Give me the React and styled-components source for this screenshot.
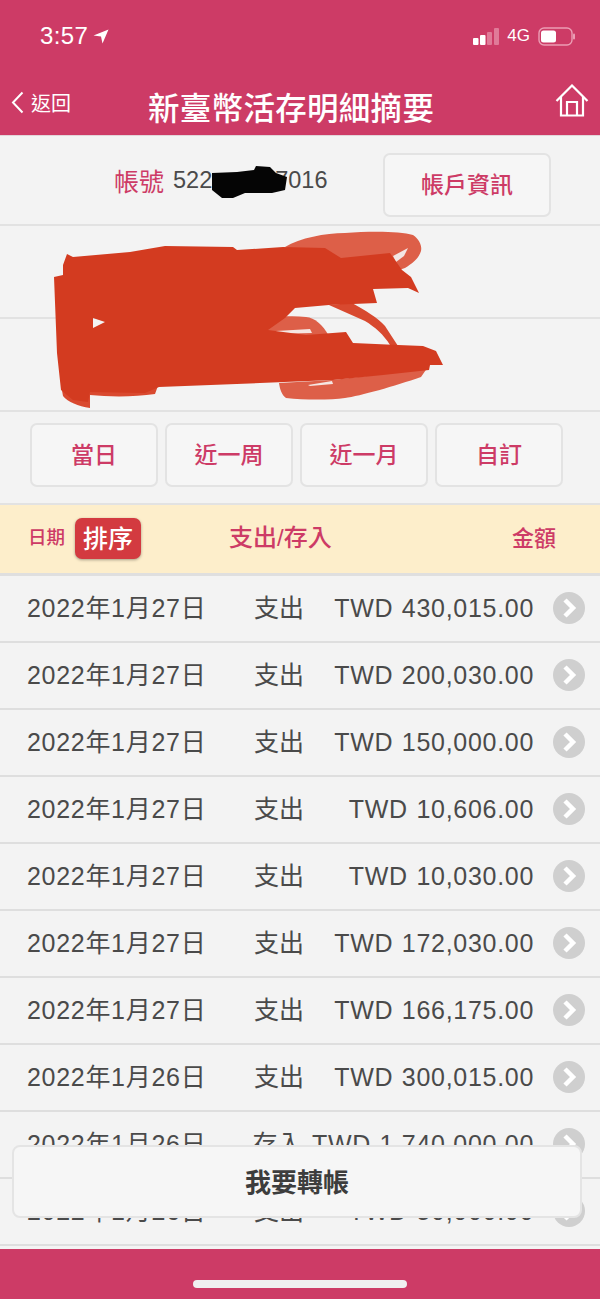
import React from 'react';
import styled, { createGlobalStyle } from 'styled-components';

const PINK = '#cd3b66';
const FONT = '"Liberation Sans", "Noto Sans CJK TC", sans-serif';

const GlobalStyle = createGlobalStyle`
  html, body { margin: 0; padding: 0; background: #f3f3f3; }
  * { box-sizing: border-box; }
`;

const Page = styled.div`
  position: relative;
  width: 600px;
  height: 1299px;
  overflow: hidden;
  background: #f3f3f3;
  font-family: ${FONT};
`;

const Header = styled.header`
  height: 136px;
  background: ${PINK};
  color: #fff;
  display: flex;
  flex-direction: column;
  border-bottom: 1px solid #e2d5d9;
`;

const StatusBar = styled.div`
  height: 78px;
  padding: 18px 25px 0 40px;
  display: flex;
  align-items: flex-start;
  justify-content: space-between;
`;

const Clock = styled.div`
  display: flex;
  align-items: center;
  gap: 5px;
  font-size: 24px;
  letter-spacing: 0.4px;
  line-height: 36px;
`;

const StatusRight = styled.div`
  display: flex;
  align-items: center;
  gap: 8px;
  height: 36px;
  font-size: 17px;
`;

const NavBar = styled.div`
  flex: 1;
  display: flex;
  align-items: center;
  padding: 0 11px;
`;

const Back = styled.div`
  display: flex;
  align-items: center;
  gap: 7px;
  font-size: 20px;
  width: 137px;
  margin-top: -8px;
`;

const Title = styled.h1`
  margin: 4px 0 0 0;
  font-size: 31.5px;
  font-weight: 500;
  letter-spacing: 0.3px;
  line-height: 40px;
  white-space: nowrap;
`;

const HomeIcon = styled.svg`
  margin-left: auto;
  margin-top: -12px;
  display: block;
`;

const Section = styled.div`
  height: ${p => p.$h}px;
  border-bottom: 2px solid #e2e2e2;
  display: flex;
  align-items: center;
`;

const AccountRow = styled(Section)`
  padding: 0 49px 0 114px;
  justify-content: space-between;
`;

const AccountText = styled.div`
  display: flex;
  align-items: center;
  gap: 9px;
  font-size: 23.5px;
  color: #4a4a4a;
`;

const Label = styled.span`
  color: ${PINK};
  font-size: 25px;
`;

// 帳號中間被遮住的部分
const HiddenDigits = styled.span`
  display: inline-block;
  width: 63px;
`;

const Button = styled.div`
  width: ${p => p.$w}px;
  height: 64px;
  padding-bottom: 4px;
  border: 2px solid #e3e3e3;
  border-radius: 7px;
  background: #f6f6f6;
  color: ${PINK};
  display: flex;
  align-items: center;
  justify-content: center;
  font-size: 23px;
  font-weight: 500;
`;

const AccountButton = styled(Button)`
  margin-top: 10px;
`;

const RangeBar = styled(Section)`
  padding: 0 0 6px 30px;
  gap: 7px;
`;

const SortHeader = styled.div`
  height: 71px;
  background: #fdeecb;
  border-bottom: 3px solid #dfdfdf;
  display: flex;
  align-items: center;
  color: ${PINK};
  font-size: 22px;
  font-weight: 500;
  padding: 0 44px 2px 28px;
`;

const DateHead = styled.span`
  font-size: 18.5px;
  width: 47px;
  margin-bottom: 5px;
`;

const SortBadge = styled.div`
  width: 66px;
  height: 41px;
  padding-bottom: 2px;
  border-radius: 7px;
  background: #d33a40;
  color: #fff;
  font-size: 25px;
  font-weight: 500;
  display: flex;
  align-items: center;
  justify-content: center;
  box-shadow: 0 1px 3px rgba(0, 0, 0, 0.35);
`;

const TypeHead = styled.span`
  margin: 0 0 5px 88px;
  font-size: 24px;
`;

const AmountHead = styled.span`
  margin: 0 0 5px auto;
`;

const Row = styled.div`
  height: 67px;
  border-bottom: 2px solid #dedede;
  display: flex;
  align-items: baseline;
  padding: 15px 15px 0 27px;
  color: #4a4a4a;
  font-size: 25px;
  line-height: 34px;
  white-space: nowrap;
`;

const DateCell = styled.span`
  width: 227px;
  letter-spacing: 0.7px;
`;

const TypeCell = styled.span`
  width: 60px;
`;

const AmountCell = styled.span`
  flex: 1;
  text-align: right;
  margin-right: 19px;
  letter-spacing: 0.7px;
  word-spacing: 1px;
`;

const Chevron = styled.svg`
  display: block;
  flex: none;
  align-self: flex-start;
  margin-top: 1px;
`;

const Scribble = styled.svg`
  position: absolute;
  left: 0;
  top: 0;
  pointer-events: none;
`;

const Footer = styled.div`
  position: absolute;
  left: 0;
  right: 0;
  bottom: 0;
  height: 50px;
  background: ${PINK};
`;

const HomeBar = styled.div`
  position: absolute;
  left: 193px;
  top: 31px;
  width: 214px;
  height: 8px;
  border-radius: 4px;
  background: #f0eff0;
`;

const TransferButton = styled.div`
  position: absolute;
  left: 12px;
  top: 1145px;
  width: 570px;
  height: 73px;
  padding-bottom: 2px;
  border: 2px solid #e4e4e4;
  border-radius: 8px;
  background: #f6f6f6;
  color: #3d3d3d;
  display: flex;
  align-items: center;
  justify-content: center;
  font-size: 26px;
  font-weight: 700;
`;

const rows = [
  ['2022年1月27日', '支出', 'TWD 430,015.00'],
  ['2022年1月27日', '支出', 'TWD 200,030.00'],
  ['2022年1月27日', '支出', 'TWD 150,000.00'],
  ['2022年1月27日', '支出', 'TWD 10,606.00'],
  ['2022年1月27日', '支出', 'TWD 10,030.00'],
  ['2022年1月27日', '支出', 'TWD 172,030.00'],
  ['2022年1月27日', '支出', 'TWD 166,175.00'],
  ['2022年1月26日', '支出', 'TWD 300,015.00'],
  ['2022年1月26日', '存入', 'TWD 1,740,000.00'],
  ['2022年1月26日', '支出', 'TWD 50,000.00'],
];

const ranges = ['當日', '近一周', '近一月', '自訂'];

const RowChevron = () => (
  <Chevron width="32" height="32" viewBox="0 0 32 32">
    <circle cx="16" cy="16" r="16" fill="#cfcfcf" />
    <path d="M12 8 L20 16 L12 24" fill="none" stroke="#fff" strokeWidth="4.5" />
  </Chevron>
);

export default function App() {
  return (
    <Page>
      <GlobalStyle />
      <Header>
        <StatusBar>
          <Clock>
            3:57
            <svg width="16" height="15" viewBox="0 0 16 15">
              <path d="M15.5 0.5 L0.5 6.5 L8 7.5 L9.5 14.5 Z" fill="#fff" />
            </svg>
          </Clock>
          <StatusRight>
            <svg width="26" height="17" viewBox="0 0 26 17">
              <rect x="0" y="10" width="5.5" height="7" rx="1" fill="#fff" />
              <rect x="7" y="7" width="5.5" height="10" rx="1" fill="#fff" />
              <rect x="14" y="4" width="5" height="13" rx="1" fill="#e07a98" />
              <rect x="21" y="0" width="5" height="17" rx="1" fill="#e07a98" />
            </svg>
            <span>4G</span>
            <svg width="37" height="19" viewBox="0 0 37 19">
              <rect x="1" y="1" width="33" height="17" rx="5" fill="none" stroke="#eb9db4" strokeWidth="1.4" />
              <rect x="3" y="3.5" width="15" height="12" rx="2.5" fill="#fff" />
              <rect x="35" y="6.5" width="2" height="6" rx="1" fill="#eb9db4" />
            </svg>
          </StatusRight>
        </StatusBar>
        <NavBar>
          <Back>
            <svg width="13" height="23" viewBox="0 0 13 23">
              <path d="M11.5 1.5 L2 11.5 L11.5 21.5" fill="none" stroke="#fff" strokeWidth="2" />
            </svg>
            返回
          </Back>
          <Title>新臺幣活存明細摘要</Title>
          <HomeIcon width="34" height="34" viewBox="0 0 34 34">
            <path d="M1.5 17 L17 1.5 L32.5 17 M6 13 V31.5 H28 V13 M12 31.5 V18 H22 V31.5" fill="none" stroke="#fff" strokeWidth="2.2" />
          </HomeIcon>
        </NavBar>
      </Header>

      <AccountRow $h={90}>
        <AccountText>
          <Label>帳號</Label>
          <span>522<HiddenDigits />7016</span>
        </AccountText>
        <AccountButton $w={168}>帳戶資訊</AccountButton>
      </AccountRow>
      <Section $h={93} />
      <Section $h={93} />
      <RangeBar $h={93}>
        {ranges.map(r => (
          <Button key={r} $w={128}>{r}</Button>
        ))}
      </RangeBar>

      <SortHeader>
        <DateHead>日期</DateHead>
        <SortBadge>排序</SortBadge>
        <TypeHead>支出/存入</TypeHead>
        <AmountHead>金額</AmountHead>
      </SortHeader>

      {rows.map((r, i) => (
        <Row key={i}>
          <DateCell>{r[0]}</DateCell>
          <TypeCell>{r[1]}</TypeCell>
          <AmountCell>{r[2]}</AmountCell>
          <RowChevron />
        </Row>
      ))}

      {/* 遮蔽塗鴉 */}
      <Scribble width="600" height="420" viewBox="0 0 600 420">
        <path d="M212 173 L237 172 L254 170 L256 166 L270 167 L276 173 L287 177 L285 190 L272 193 L245 193 L233 198 L222 198 L212 190 Z" fill="#050505" />
        <path d="M285 247 C300 238 325 233 345 233 C370 231 400 231 413 235 C420 240 422 246 421 251 C419 258 413 263 405 268 L390 273 L340 262 Z" fill="#dd5f48" />
        <path d="M393 256 L408 248 L404 256 L396 262 Z" fill="#f3e6e3" />
        <path d="M192 250 L232 247 L238 252 L225 262 L195 262 Z" fill="#dd5f48" />
        <path d="M197 262 L210 260 L212 263 L198 264 Z" fill="#f7ece9" />
        <path d="M329 305 L352 303 C365 310 378 318 385 326 L398 346 L390 345 C384 335 375 327 365 321 Z" fill="#d8492f" />
        <path d="M268 318 C285 316 295 316 306 317 C315 318 322 324 329 336 L268 337 Z" fill="#dd5f48" />
        <path d="M276 331 L310 329 L312 333 L272 334 Z" fill="#f5e6e2" />
        <path d="M279 383 C280 390 282 395 286 398 C305 400 330 400 345 398 C360 396 395 386 421 377 L430 364 L383 374 L333 380 Z" fill="#dd5f48" />
        <path d="M308 385 L332 381 L333 384 L310 386 Z" fill="#f5e6e2" />
        <path d="M61 385 L159 383 L155 394 C135 397 110 397 90 395 L90 408 C78 406 68 402 63 396 Z" fill="#d9492f" />
        <path d="M63 265 L67 254 L73 257 L130 252 L165 246 L233 247 L237 250 L283 247 L325 248 L341 258 L390 253 L402 270 L411 277 L419 293 L408 288 L373 289 L377 303 L329 305 L295 308 L285 318 L268 330 L306 335 L346 332 L353 343 L398 345 L423 346 L436 351 L443 365 L430 365 L429 370 L383 375 L333 380 L260 383 L159 387 L145 393 L90 392 L88 402 L73 400 L61 390 L57 353 L54 277 L63 275 Z M93 318 L93 328 L105 322 Z" fill="#d33b20" fillRule="evenodd" />
      </Scribble>

      <TransferButton>我要轉帳</TransferButton>
      <Footer>
        <HomeBar />
      </Footer>
    </Page>
  );
}
